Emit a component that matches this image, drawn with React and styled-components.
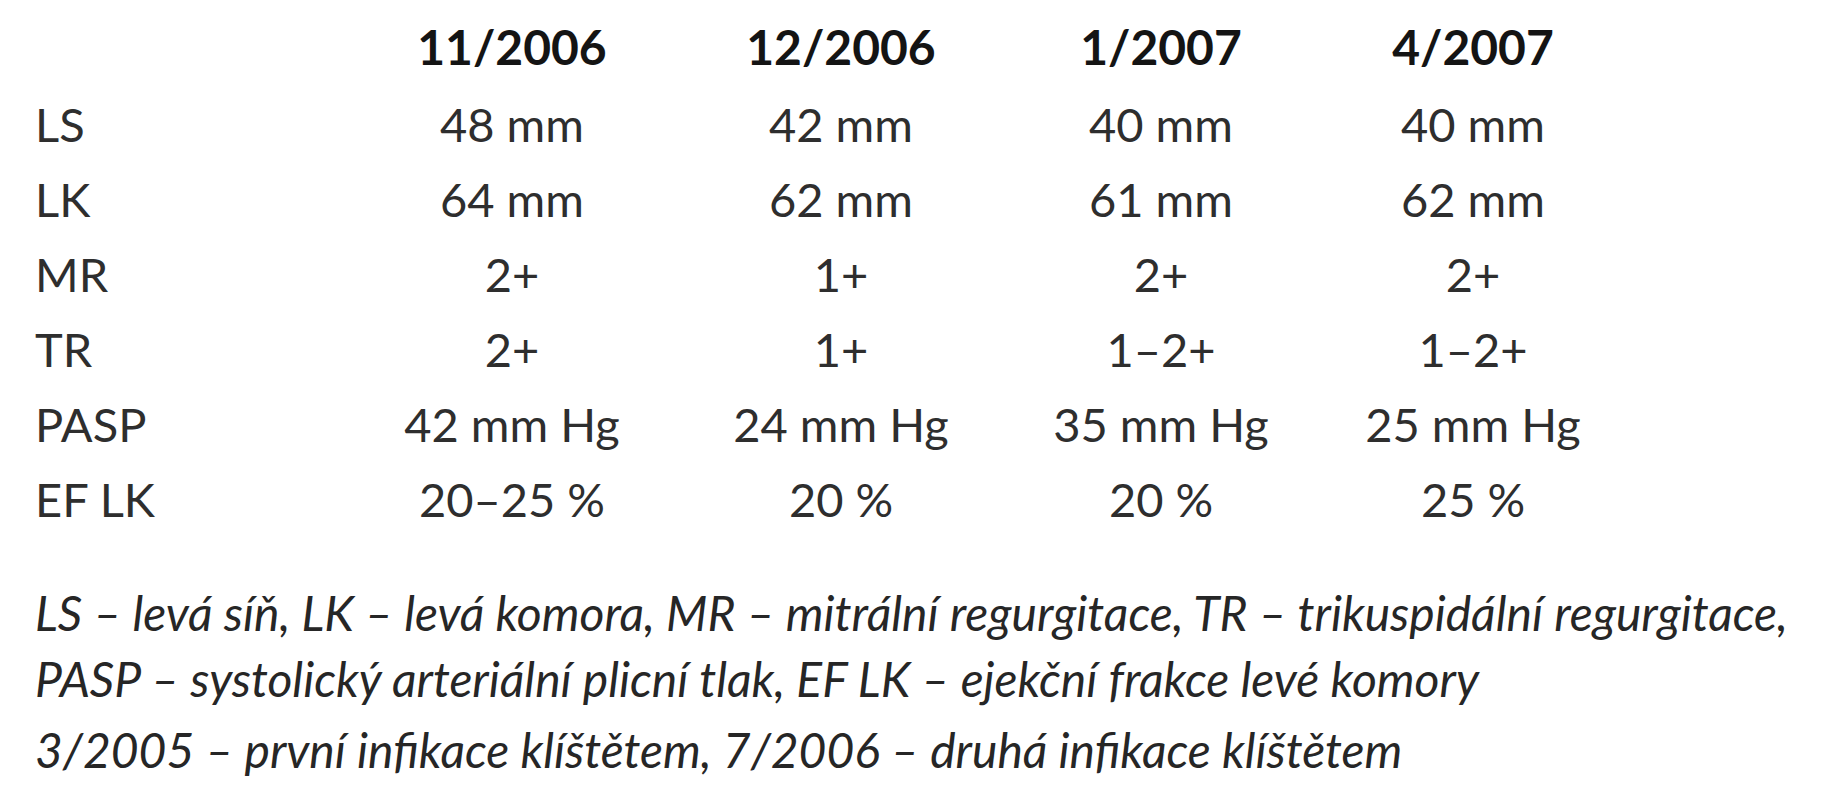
import React from 'react';
import styled, { createGlobalStyle } from 'styled-components';

const GlobalStyle = createGlobalStyle`
  body {
    margin: 0;
    background: #ffffff;
    font-family: Lato, "Open Sans", sans-serif;
  }
`;

const Page = styled.div`
  padding: 6px 0 0 35px;
  width: 1821px;
  height: 800px;
  box-sizing: border-box;
  color: #2e2e2e;
`;

const Table = styled.div`
  display: grid;
  grid-template-columns: 312px 330px 328px 312px 312px;
  grid-auto-rows: 75px;
  grid-template-rows: 80px;
  align-items: center;
`;

const HeadCell = styled.div`
  font-size: 48px;
  font-weight: 700;
  color: #141414;
  text-align: center;
`;

const Label = styled.div`
  font-size: 47px;
  font-weight: 400;
`;

const Value = styled.div`
  font-size: 47px;
  font-weight: 400;
  text-align: center;
`;

const Note = styled.p`
  margin: ${(p) => (p.$first ? '44px' : '5px')} 0 0 0;
  font-size: 48px;
  font-style: italic;
  line-height: 66px;
  color: #262626;
  white-space: nowrap;
`;

const columns = ['11/2006', '12/2006', '1/2007', '4/2007'];

const rows = [
  ['LS', '48 mm', '42 mm', '40 mm', '40 mm'],
  ['LK', '64 mm', '62 mm', '61 mm', '62 mm'],
  ['MR', '2+', '1+', '2+', '2+'],
  ['TR', '2+', '1+', '1–2+', '1–2+'],
  ['PASP', '42 mm Hg', '24 mm Hg', '35 mm Hg', '25 mm Hg'],
  ['EF LK', '20–25 %', '20 %', '20 %', '25 %'],
];

export default function App() {
  return (
    <>
      <GlobalStyle />
      <Page>
        <Table>
          <div />
          {columns.map((c) => (
            <HeadCell key={c}>{c}</HeadCell>
          ))}
          {rows.map((r) => (
            <React.Fragment key={r[0]}>
              <Label>{r[0]}</Label>
              {r.slice(1).map((v, i) => (
                <Value key={i}>{v}</Value>
              ))}
            </React.Fragment>
          ))}
        </Table>
        <Note $first>
          LS – levá síň, LK – levá komora, MR – mitrální regurgitace, TR – trikuspidální regurgitace,
          <br />
          PASP – systolický arteriální plicní tlak, EF LK – ejekční frakce levé komory
        </Note>
        <Note>3/2005 – první infikace klíštětem, 7/2006 – druhá infikace klíštětem</Note>
      </Page>
    </>
  );
}
